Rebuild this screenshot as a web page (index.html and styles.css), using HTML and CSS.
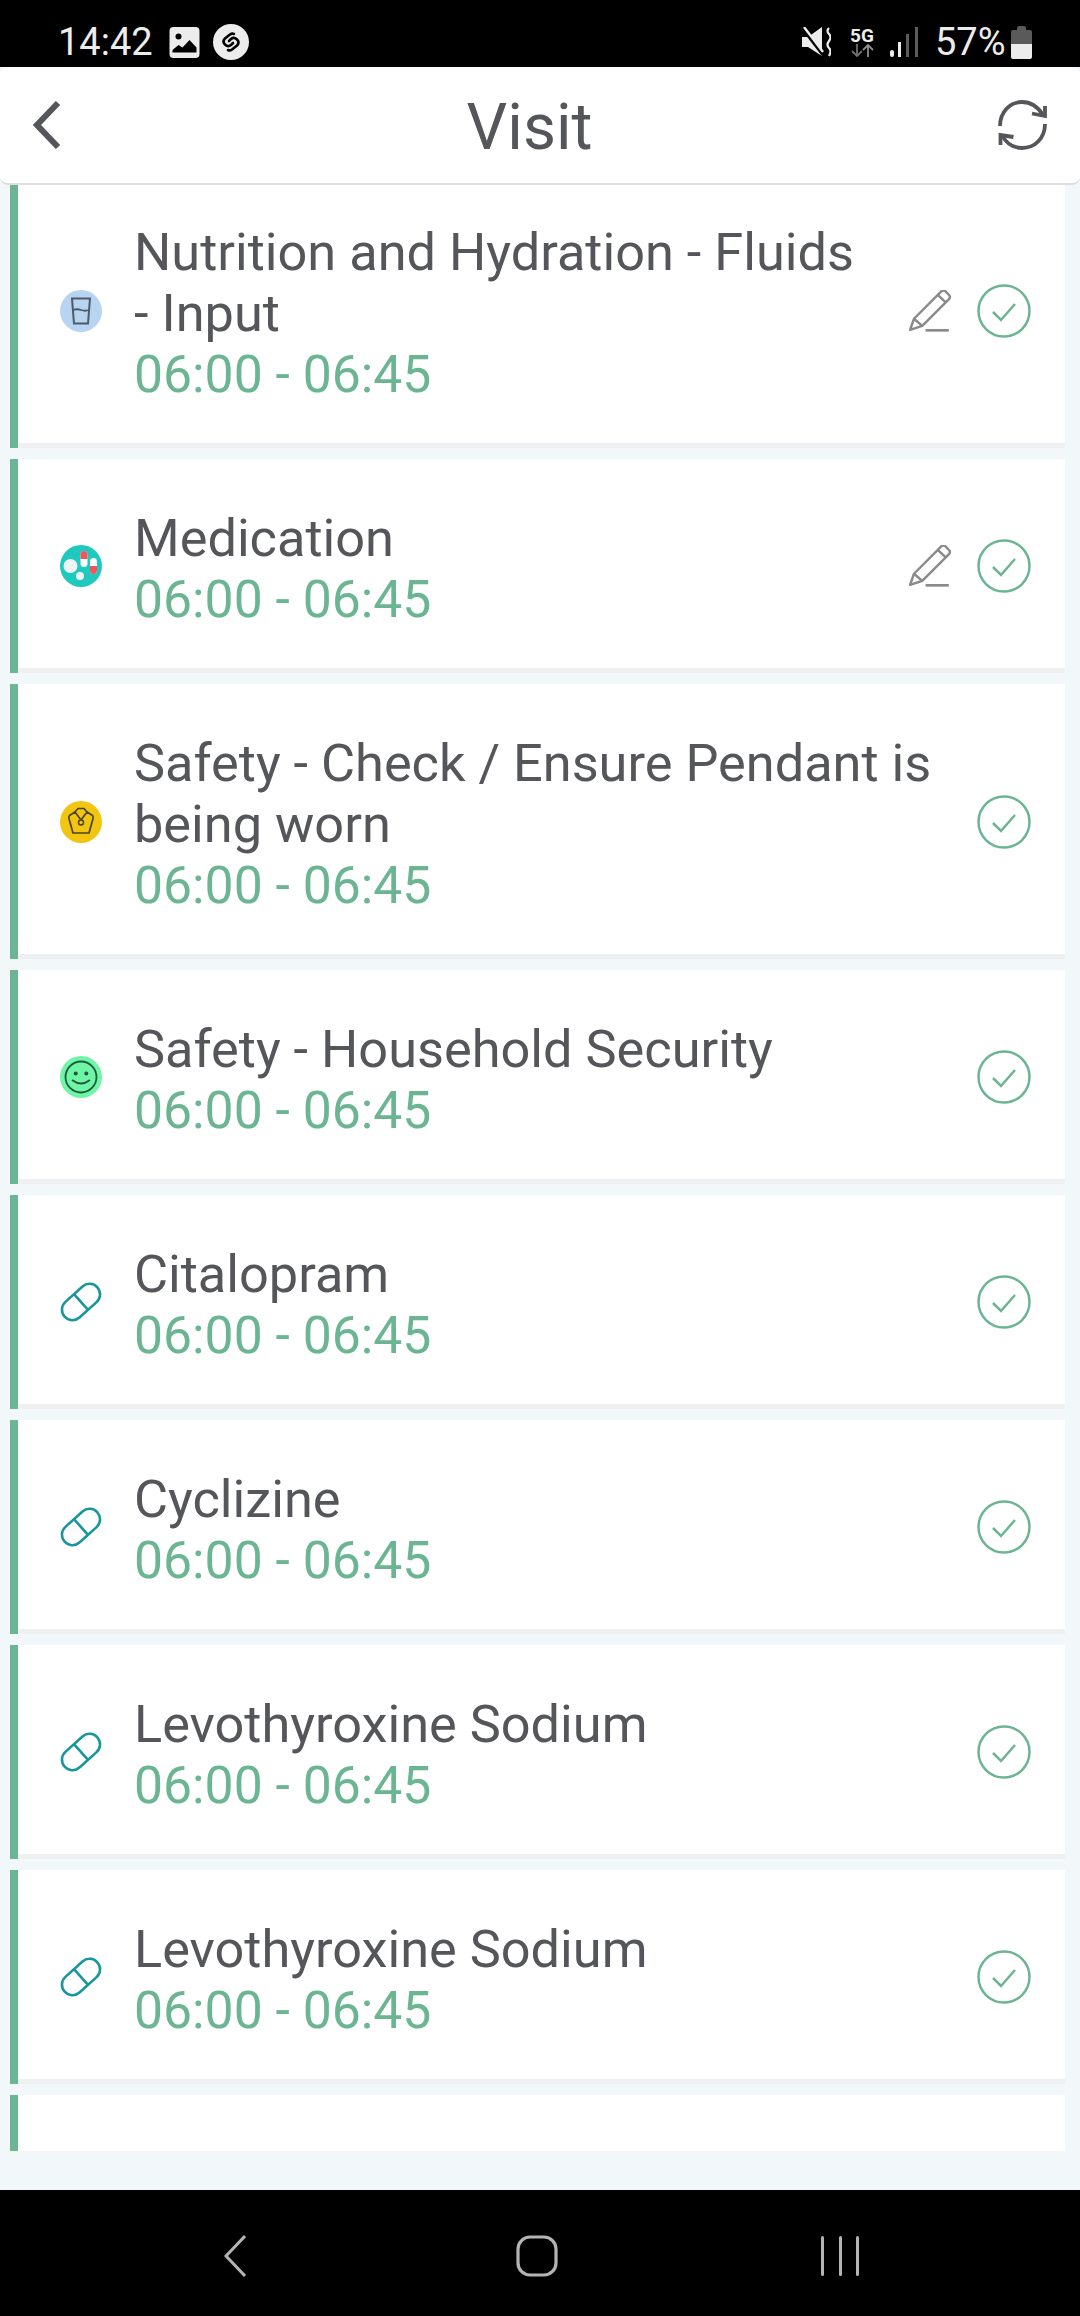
FILE: index.html
```html
<!DOCTYPE html>
<html lang="en">
<head>
  <meta charset="UTF-8">
  <meta name="viewport" content="width=device-width, initial-scale=1.0">
  <title>Visit</title>
  <link rel="stylesheet" href="styles.css">
</head>
<body>
  <!-- Shared icons -->
  <svg class="icon-defs">
    <symbol id="icon-pencil" viewBox="1 4 38 38">
      <path d="M2 40l3.500-10L30 5.500q2-2 4-.2l3 3q2 2 .2 4L13 36.500zM5.500 30l7.500 6.500M27 8.500l7.500 7" fill="none" stroke="#8a8a8a" stroke-width="2.200" stroke-linejoin="round"/>
      <path d="M16 40.500h21" stroke="#8a8a8a" stroke-width="2.400"/>
    </symbol>
    <symbol id="icon-check" viewBox="0 0 54 54">
      <circle cx="27" cy="27" r="25.500" fill="none" stroke="#6cb592" stroke-width="2.500"/>
      <path d="M16 28l8 8 14-16" fill="none" stroke="#6cb592" stroke-width="2.500"/>
    </symbol>
    <symbol id="icon-pill" viewBox="0 0 42 42">
      <g transform="rotate(-42 21 21)" fill="none" stroke="#17979b" stroke-width="2.600">
        <rect x="-1" y="10.500" width="44" height="21" rx="10.500"/>
        <path d="M21 10.500v21"/>
      </g>
    </symbol>
  </svg>

  <div class="page">
    <div class="status-bar">
      <span class="clock">14:42</span>
      <svg class="st-image" viewBox="0 0 30 31">
        <rect width="30" height="31" rx="4" fill="#ececec"/>
        <circle cx="9" cy="9.500" r="3" fill="#000"/>
        <path d="M3 23l6-5 4 2.500 7-7.500 7 7.500v5H3z" fill="#000"/>
      </svg>
      <svg class="st-shazam" viewBox="0 0 36 36">
        <circle cx="18" cy="18" r="18" fill="#ececec"/>
        <path d="M21 10q-2-1-4 .5l-5 4q-3 3 0 6t6 .5l2-2M15 26q2 1 4-.5l5-4q3-3 0-6t-6-.5l-2 2" fill="none" stroke="#000" stroke-width="2.600" stroke-linecap="round"/>
      </svg>
      <div class="status-right">
        <svg class="st-mute" viewBox="0 0 29 30">
          <path d="M0 10h6L20 0v29L6 20H0z" fill="#ececec"/>
          <path d="M1 2l20 26" stroke="#000" stroke-width="3"/>
          <path d="M2 0l19 25" stroke="#ececec" stroke-width="2.400"/>
          <path d="M27 1q-3 3 0 6t0 7 0 7 0 8" fill="none" stroke="#ececec" stroke-width="2.200"/>
        </svg>
        <div class="st-net">
          <span class="net-label">5G</span>
          <svg class="net-arrows" viewBox="0 0 23 13">
            <path d="M6 0v12M1 7l5 5 5-5" fill="none" stroke="#6f6f6f" stroke-width="1.800"/>
            <path d="M17 13V1M12 6l5-5 5 5" fill="none" stroke="#8f8f8f" stroke-width="1.800"/>
          </svg>
        </div>
        <svg class="st-signal" viewBox="0 0 28 30">
          <rect x="0" y="23" width="4" height="7" rx="2" fill="#ececec"/>
          <rect x="8" y="15" width="3" height="15" fill="#ececec"/>
          <rect x="16" y="7" width="3" height="23" fill="#5c5c5c"/>
          <rect x="25" y="0" width="3" height="30" fill="#5c5c5c"/>
        </svg>
        <span class="battery-pct">57%</span>
        <svg class="st-battery" viewBox="0 0 21 33">
          <path d="M6 2q0-2 2-2h5q2 0 2 2v2h4q2 0 2 2v12H0V6q0-2 2-2h4z" fill="#5a5a5a"/>
          <path d="M0 18h21v13q0 2-2 2H2q-2 0-2-2z" fill="#ececec"/>
        </svg>
      </div>
    </div>

    <header class="top-bar">
      <svg class="back-btn" viewBox="0 0 28 48"><path d="M25 2L4 24l21 22" fill="none" stroke="#55565a" stroke-width="6"/></svg>
      <h1>Visit</h1>
      <svg class="refresh-btn" viewBox="0 0 49 50">
        <path d="M2 26C2 12 12 2 24 2c9 0 16 5 21 13M47 24c0 14-10 24-23 24-9 0-16-5-20-13" fill="none" stroke="#55565a" stroke-width="3.800"/>
        <path d="M47 6v10l-13-2.500M2.500 45V35l13 2" fill="none" stroke="#55565a" stroke-width="3.800"/>
      </svg>
    </header>

    <div class="list-view">
      <div class="task-list">
        <div class="task">
          <svg class="task-icon" viewBox="0 0 42 42">
            <circle cx="21" cy="21" r="21" fill="#b7d4f1"/>
            <path d="M12 8.500h18l-2 25H14z" fill="none" stroke="#4f5a69" stroke-width="2"/>
            <path d="M13 20q4-1.500 8 0t8 0" fill="none" stroke="#4f5a69" stroke-width="1.800"/>
          </svg>
          <div class="task-text">
            <div class="task-title">Nutrition and Hydration - Fluids<br>- Input</div>
            <div class="task-time">06:00 - 06:45</div>
          </div>
          <svg class="edit-icon"><use href="#icon-pencil"/></svg>
          <svg class="check-icon"><use href="#icon-check"/></svg>
        </div>

        <div class="task">
          <svg class="task-icon" viewBox="0 0 42 42">
            <circle cx="21" cy="21" r="21" fill="#1fc9bd"/>
            <circle cx="10.500" cy="21" r="7" fill="#eef3f8"/>
            <circle cx="20" cy="31" r="4" fill="#eef3f8"/>
            <rect x="20.500" y="6" width="7" height="16" rx="3.500" fill="#fff"/>
            <path d="M20.500 14V9.500a3.500 3.500 0 0 1 7 0V14z" fill="#f2545b"/>
            <rect x="30" y="13" width="7" height="16" rx="3.500" fill="#fff"/>
            <path d="M30 21v4.500a3.500 3.500 0 0 0 7 0V21z" fill="#f2545b"/>
          </svg>
          <div class="task-text">
            <div class="task-title">Medication</div>
            <div class="task-time">06:00 - 06:45</div>
          </div>
          <svg class="edit-icon"><use href="#icon-pencil"/></svg>
          <svg class="check-icon"><use href="#icon-check"/></svg>
        </div>

        <div class="task">
          <svg class="task-icon" viewBox="0 0 42 42">
            <circle cx="21" cy="21" r="21" fill="#f2c512"/>
            <path d="M15 11l3-3.500h6l3 3.500-6 8zM15 11l-5.500 3.500q-1 1-.5 3t4 14.500h16q3.500-12.500 4-14.500t-.5-3L27 11" fill="none" stroke="#4d4420" stroke-width="1.700" stroke-linejoin="round"/>
            <circle cx="21" cy="21.500" r="2.500" fill="#f2c512" stroke="#4d4420" stroke-width="1.500"/>
          </svg>
          <div class="task-text">
            <div class="task-title">Safety - Check / Ensure Pendant is being worn</div>
            <div class="task-time">06:00 - 06:45</div>
          </div>
          <svg class="check-icon"><use href="#icon-check"/></svg>
        </div>

        <div class="task">
          <svg class="task-icon" viewBox="0 0 42 42">
            <circle cx="21" cy="21" r="21" fill="#6ff5a6"/>
            <circle cx="21" cy="21" r="15.500" fill="none" stroke="#20593e" stroke-width="1.800"/>
            <circle cx="15.700" cy="17.500" r="2" fill="#20593e"/>
            <circle cx="26.300" cy="17.500" r="2" fill="#20593e"/>
            <path d="M12 24q9 7 18 0" fill="none" stroke="#20593e" stroke-width="1.800"/>
          </svg>
          <div class="task-text">
            <div class="task-title">Safety - Household Security</div>
            <div class="task-time">06:00 - 06:45</div>
          </div>
          <svg class="check-icon"><use href="#icon-check"/></svg>
        </div>

        <div class="task">
          <svg class="task-icon"><use href="#icon-pill"/></svg>
          <div class="task-text">
            <div class="task-title">Citalopram</div>
            <div class="task-time">06:00 - 06:45</div>
          </div>
          <svg class="check-icon"><use href="#icon-check"/></svg>
        </div>

        <div class="task">
          <svg class="task-icon"><use href="#icon-pill"/></svg>
          <div class="task-text">
            <div class="task-title">Cyclizine</div>
            <div class="task-time">06:00 - 06:45</div>
          </div>
          <svg class="check-icon"><use href="#icon-check"/></svg>
        </div>

        <div class="task">
          <svg class="task-icon"><use href="#icon-pill"/></svg>
          <div class="task-text">
            <div class="task-title">Levothyroxine Sodium</div>
            <div class="task-time">06:00 - 06:45</div>
          </div>
          <svg class="check-icon"><use href="#icon-check"/></svg>
        </div>

        <div class="task">
          <svg class="task-icon"><use href="#icon-pill"/></svg>
          <div class="task-text">
            <div class="task-title">Levothyroxine Sodium</div>
            <div class="task-time">06:00 - 06:45</div>
          </div>
          <svg class="check-icon"><use href="#icon-check"/></svg>
        </div>

        <div class="task"></div>
      </div>
    </div>

    <div class="nav-bar">
      <svg class="nav-back" viewBox="0 0 22 42"><path d="M21 1L2 21l19 20" fill="none" stroke="#b4b4b4" stroke-width="3"/></svg>
      <svg class="nav-home" viewBox="0 0 42 42"><rect x="2" y="2" width="38" height="38" rx="12" fill="none" stroke="#b4b4b4" stroke-width="3.200"/></svg>
      <div class="nav-recent"><span></span><span></span><span></span></div>
    </div>
  </div>
</body>
</html>
```

FILE: styles.css
```css
:root {
  --page-bg: #f2f7fa;
  --text: #55565a;
  --green: #6cb592;
}

html, body {
  margin: 0;
  padding: 0;
}

body {
  font-family: Roboto, sans-serif;
  background-color: var(--page-bg);
  color: var(--text);
}

.icon-defs {
  display: none;
}

.page {
  width: 1080px;
  height: 2316px;
  display: flex;
  flex-direction: column;
  overflow: hidden;
}

/* Status bar */
.status-bar {
  flex: 0 0 67px;
  box-sizing: border-box;
  background-color: #000;
  color: #ececec;
  display: flex;
  align-items: center;
  padding: 17px 48px 0 58px;
  font-size: 38px;
}

.clock {
  width: 111px;
}

.st-image {
  width: 31px;
  height: 31px;
}

.st-shazam {
  width: 36px;
  height: 36px;
  margin-left: 13px;
}

.status-right {
  margin-left: auto;
  display: flex;
  align-items: center;
}

.st-mute {
  width: 29px;
  height: 30px;
}

.st-net {
  width: 24px;
  margin-left: 19px;
  display: flex;
  flex-direction: column;
  align-items: center;
}

.net-label {
  font-size: 19px;
  font-weight: 700;
  line-height: 17px;
}

.net-arrows {
  width: 23px;
  height: 13px;
}

.st-signal {
  width: 28px;
  height: 30px;
  margin-left: 16px;
}

.battery-pct {
  margin-left: 17px;
  width: 76px;
  line-height: 33px;
}

.st-battery {
  width: 21px;
  height: 33px;
}

/* Top bar */
.top-bar {
  flex: 0 0 118px;
  box-sizing: border-box;
  background-color: #fff;
  border-bottom: 2px solid #dcdfe2;
  border-radius: 8px;
  display: flex;
  align-items: center;
  justify-content: space-between;
  padding: 0 33px;
}

.top-bar h1 {
  margin: 0;
  font-size: 64px;
  font-weight: 400;
  line-height: 76px;
  position: relative;
  top: 3px;
}

.back-btn {
  width: 28px;
  height: 48px;
}

.refresh-btn {
  width: 49px;
  height: 50px;
}

/* Task list */
.list-view {
  flex: 0 0 1966px;
  overflow: hidden;
}

.task-list {
  margin: -12px 15px 0 10px;
  display: flex;
  flex-direction: column;
  gap: 11px;
}

.task {
  min-height: 214px;
  flex: none;
  box-sizing: border-box;
  background-color: #fff;
  border-left: 8px solid var(--green);
  box-shadow: inset 0 -5px 0 #eef0f1;
  padding: 49px 34px 43px 42px;
  display: flex;
  align-items: center;
}

.task-icon {
  flex: none;
  width: 42px;
  height: 42px;
  position: relative;
  top: -3px;
}

.task-text {
  flex: 1;
  min-width: 0;
  margin-left: 32px;
}

.task-title {
  font-size: 52.300px;
  line-height: 61px;
}

.task-time {
  font-size: 51.700px;
  line-height: 61px;
  color: var(--green);
}

.edit-icon {
  flex: none;
  width: 42px;
  height: 42px;
  margin-left: 26px;
  position: relative;
  top: -3px;
}

.check-icon {
  flex: none;
  width: 54px;
  height: 54px;
  margin-left: 26px;
  position: relative;
  top: -3px;
}

/* Navigation bar */
.nav-bar {
  flex: 1;
  margin-top: 39px;
  background-color: #000;
  display: flex;
  align-items: flex-start;
  padding: 45px 0 0 224px;
}

.nav-back {
  width: 22px;
  height: 42px;
}

.nav-home {
  width: 42px;
  height: 42px;
  margin-left: 270px;
}

.nav-recent {
  margin-left: 263px;
  margin-top: 1px;
  height: 40px;
  display: flex;
  gap: 14.500px;
}

.nav-recent span {
  width: 3px;
  background-color: #b4b4b4;
  border-radius: 2px;
}
```
